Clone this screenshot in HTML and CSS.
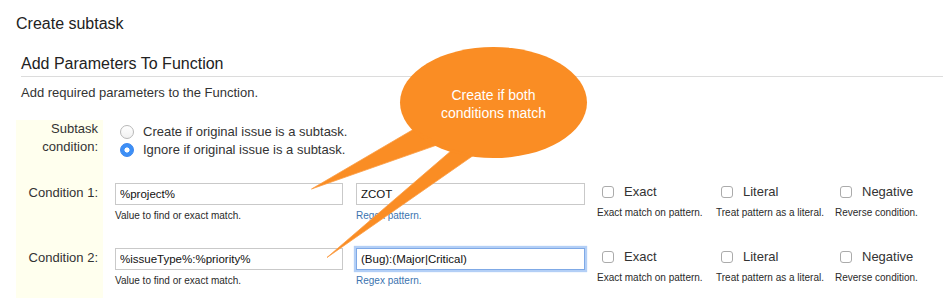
FILE: index.html
```html
<!DOCTYPE html>
<html lang="en">
<head>
  <meta charset="UTF-8">
  <title>Create subtask</title>
  <link rel="stylesheet" href="styles.css">
</head>
<body>
  <h1 class="page-title">Create subtask</h1>

  <div class="section">
    <h2 class="section-title">Add Parameters To Function</h2>
    <p class="section-desc">Add required parameters to the Function.</p>
  </div>

  <div class="form">
    <div class="row row-radio">
      <div class="row-label">Subtask<br>condition:</div>
      <div class="row-field">
        <label class="radio-line"><input type="radio" name="sub" class="radio"> Create if original issue is a subtask.</label>
        <label class="radio-line"><input type="radio" name="sub" class="radio" checked> Ignore if original issue is a subtask.</label>
      </div>
    </div>

    <div class="row row-cond">
      <div class="row-label">Condition 1:</div>
      <div class="row-field cond-fields">
        <div class="cell cell-value">
          <input class="text-input" type="text" value="%project%">
          <div class="hint">Value to find or exact match.</div>
        </div>
        <div class="cell cell-regex">
          <input class="text-input" type="text" value="ZCOT">
          <div class="hint link">Regex pattern.</div>
        </div>
        <div class="cell cell-check">
          <label class="check-line"><input type="checkbox" class="check"> Exact</label>
          <div class="hint hint-check">Exact match on pattern.</div>
        </div>
        <div class="cell cell-check">
          <label class="check-line"><input type="checkbox" class="check"> Literal</label>
          <div class="hint hint-check">Treat pattern as a literal.</div>
        </div>
        <div class="cell cell-check">
          <label class="check-line"><input type="checkbox" class="check"> Negative</label>
          <div class="hint hint-check">Reverse condition.</div>
        </div>
      </div>
    </div>

    <div class="row row-cond row-last">
      <div class="row-label">Condition 2:</div>
      <div class="row-field cond-fields">
        <div class="cell cell-value">
          <input class="text-input" type="text" value="%issueType%:%priority%">
          <div class="hint">Value to find or exact match.</div>
        </div>
        <div class="cell cell-regex">
          <input class="text-input focused" type="text" value="(Bug):(Major|Critical)">
          <div class="hint link">Regex pattern.</div>
        </div>
        <div class="cell cell-check">
          <label class="check-line"><input type="checkbox" class="check"> Exact</label>
          <div class="hint hint-check">Exact match on pattern.</div>
        </div>
        <div class="cell cell-check">
          <label class="check-line"><input type="checkbox" class="check"> Literal</label>
          <div class="hint hint-check">Treat pattern as a literal.</div>
        </div>
        <div class="cell cell-check">
          <label class="check-line"><input type="checkbox" class="check"> Negative</label>
          <div class="hint hint-check">Reverse condition.</div>
        </div>
      </div>
    </div>
  </div>

  <!-- callout bubble drawn over the form -->
  <div class="callout">
    <svg width="943" height="298" viewBox="0 0 943 298">
      <g fill="#fa8d24" stroke="#fb9d45" stroke-width="0.8">
        <polygon points="414,129 311.5,189 437,145"/>
        <polygon points="452,150 327,257.5 474,155"/>
      </g>
      <ellipse cx="493.5" cy="102.5" rx="93.5" ry="55.5" fill="#fa8d24"/>
      <polygon points="414,129 437,145 474,155 452,150" fill="#fa8d24"/>
    </svg>
    <div class="callout-text">Create if both<br>conditions match</div>
  </div>
</body>
</html>
```

FILE: styles.css
```css
body {
  margin: 0;
  position: relative;
  width: 943px;
  height: 298px;
  overflow: hidden;
  background: #fff;
  color: #333;
  font-family: "Liberation Sans", Arial, sans-serif;
  font-size: 13px;
  line-height: 18px;
}
.page-title {
  margin: 14px 0 0 16px;
  font-size: 16px;
  font-weight: normal;
  line-height: 20px;
  color: #222;
}
.section {
  margin: 20px 0 0 21px;
}
.section-title {
  margin: 0;
  padding-bottom: 2px;
  font-size: 16px;
  font-weight: normal;
  line-height: 20px;
  color: #222;
  border-bottom: 1px solid #dcdcdc;
}
.section-desc {
  margin: 7px 0 0;
  line-height: 18px;
}
.form {
  margin: 18px 0 0 16px;
}
.row {
  display: flex;
}
.row-label {
  width: 82px;
  padding-right: 5px;
  flex: none;
  text-align: right;
  background: #ffffee;
}
.row-field {
  padding-left: 12px;
}
.row-radio {
  height: 60px;
}
.row-radio .row-field {
  padding-top: 3px;
}
.radio-line {
  display: flex;
  align-items: center;
  height: 18px;
}
.radio {
  appearance: none;
  -webkit-appearance: none;
  width: 14px;
  height: 14px;
  margin: 0 9px 0 5px;
  border: 1px solid #b8b8b8;
  border-radius: 50%;
  background: linear-gradient(#fff, #f1f1f1);
  box-sizing: border-box;
}
.radio:checked {
  border-color: #3a85ee;
  background: radial-gradient(circle, #fff 0 2.3px, #3d8ff6 2.8px);
}
.row-cond {
  height: 65px;
}
.row-cond .row-label {
  padding-top: 4px;
}
.row-cond .row-field {
  padding-top: 3px;
}
.row-last {
  height: 53px;
}
.cond-fields {
  display: flex;
}
.cell-value {
  width: 228px;
}
.cell-regex {
  width: 229px;
  margin-left: 13px;
}
.cell-check {
  width: 119px;
}
.cell-regex + .cell-check {
  margin-left: 12px;
}
.text-input {
  display: block;
  width: 100%;
  height: 22px;
  margin: 0;
  padding: 0 4px;
  box-sizing: border-box;
  border: 1px solid #c9c9c9;
  border-radius: 0;
  outline: none;
  font-family: "Liberation Sans", Arial, sans-serif;
  font-size: 11.5px;
  color: #111;
  background: #fff;
}
.text-input.focused {
  border-color: #7fa9e6;
  box-shadow: 0 0 1px 2px #b3cff6;
}
.hint {
  margin-top: 4px;
  font-size: 10px;
  line-height: 14px;
  color: #2a2a2a;
}
.link {
  color: #3b73af;
}
.check-line {
  display: flex;
  align-items: center;
  height: 18px;
}
.check {
  appearance: none;
  -webkit-appearance: none;
  width: 12px;
  height: 12px;
  margin: 0 10px 0 5px;
  border: 1px solid #ababab;
  border-radius: 3px;
  background: #fff;
  box-sizing: border-box;
}
.hint-check {
  margin-top: 6px;
  line-height: 12px;
}
.callout {
  position: absolute;
  top: 0;
  left: 0;
  width: 943px;
  height: 298px;
  pointer-events: none;
}
.callout svg {
  display: block;
}
.callout-text {
  position: absolute;
  top: 86px;
  left: 400px;
  width: 187px;
  text-align: center;
  font-size: 14px;
  line-height: 18px;
  color: #fff;
}
```
